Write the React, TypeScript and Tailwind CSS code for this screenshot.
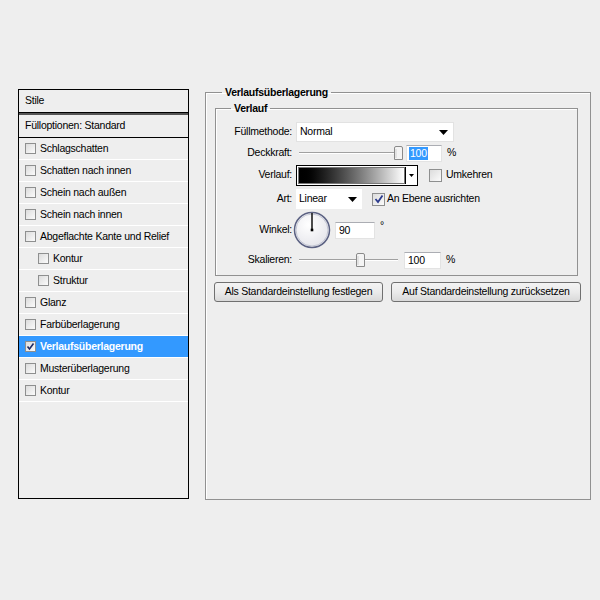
import React from 'react';

const font = { fontFamily: '"Liberation Sans", Arial, sans-serif' };

interface StyleRow {
  label: string;
  indent?: boolean;
  checked?: boolean;
}

const rows: StyleRow[] = [
  { label: 'Schlagschatten' },
  { label: 'Schatten nach innen' },
  { label: 'Schein nach außen' },
  { label: 'Schein nach innen' },
  { label: 'Abgeflachte Kante und Relief' },
  { label: 'Kontur', indent: true },
  { label: 'Struktur', indent: true },
  { label: 'Glanz' },
  { label: 'Farbüberlagerung' },
  { label: 'Verlaufsüberlagerung', checked: true },
  { label: 'Musterüberlagerung' },
  { label: 'Kontur' },
];

const CheckBox: React.FC<{ checked?: boolean }> = ({ checked }) => (
  <span className="relative flex h-[11px] w-[11px] shrink-0 items-center justify-center border border-[#8e8f8f] bg-gradient-to-br from-[#dcdcdc] to-[#fbfbfb]">
    {checked && (
      <svg width="9" height="9" viewBox="0 0 9 9">
        <path d="M1.5 4.5 L3.5 7 L7.5 1.5" fill="none" stroke="#1f2a64" strokeWidth="1.6" />
      </svg>
    )}
  </span>
);

const Triangle = () => (
  <svg width="9" height="5" viewBox="0 0 9 5">
    <path d="M0 0 H9 L4.5 5 Z" fill="#000" />
  </svg>
);

const Slider: React.FC<{ width: number; thumb: number }> = ({ width, thumb }) => (
  <div className="relative h-[16px]" style={{ width }}>
    <div className="absolute left-0 right-0 top-[7px] h-[2px] border-t border-[#a0a0a0] border-b border-b-white" />
    <svg className="absolute top-[1px]" style={{ left: thumb }} width="9" height="14" viewBox="0 0 9 14">
      <path d="M0.5 2 Q0.5 0.5 2 0.5 H7 Q8.5 0.5 8.5 2 V13.5 H0.5 Z" fill="#f4f4f4" stroke="#8a8a8a" />
      <path d="M2 3 V12" stroke="#d0d0d0" />
    </svg>
  </div>
);

const NumberBox: React.FC<{ value: string; width: number; selected?: boolean }> = ({ value, width, selected }) => (
  <div className="flex h-[17px] items-center border border-[#e3e3e3] border-t-[#abadb3] bg-white pl-[2px]" style={{ width }}>
    <span className={selected ? 'bg-[#3399ff] px-[1px] leading-[13px] text-white' : 'px-[1px] leading-[13px]'}>{value}</span>
  </div>
);

export default function App() {
  return (
    <div className="min-h-[600px] w-[600px] bg-[#eeeeee] pl-[18px] pt-[85px] text-[10.5px] tracking-[-0.25px] text-black" style={font}>
      <div className="flex items-start">
        {/* style list */}
        <div className="mt-[4px] flex h-[410px] w-[171px] flex-col border border-black bg-[#eeeeee]">
          <div className="flex h-[23px] items-center border-b border-black pl-[6px]">Stile</div>
          <div className="h-[2px] border-b-2 border-[#555]" />
          <div className="flex h-[23px] items-center border-b border-black pl-[6px]">Fülloptionen: Standard</div>
          {rows.map((r, i) => (
            <div
              key={i}
              className={`flex h-[22px] items-center gap-[4px] border-b border-white ${r.indent ? 'pl-[19px]' : 'pl-[6px]'} ${r.checked ? 'bg-[#3399ff] font-bold text-white' : ''}`}
            >
              <CheckBox checked={r.checked} />
              <span>{r.label}</span>
            </div>
          ))}
        </div>

        {/* gradient overlay settings */}
        <fieldset className="ml-[16px] h-[415px] w-[383px] border border-[#919191] px-[9px] shadow-[inset_1px_1px_0_white]">
          <legend className="ml-[7px] px-[3px] font-bold leading-[14px]">Verlaufsüberlagerung</legend>
          <fieldset className="mt-[2px] w-[363px] border border-[#919191] pb-[7px] shadow-[inset_1px_1px_0_white]">
            <legend className="ml-[15px] px-[3px] font-bold leading-[14px]">Verlauf</legend>

            <div className="mt-[7px] flex h-[20px] items-center">
              <span className="w-[76px] text-right">Füllmethode:</span>
              <div className="ml-[4px] flex h-[20px] w-[158px] items-center justify-between border border-[#e2e2e2] bg-white pl-[3px] pr-[5px]">
                <span>Normal</span>
                <Triangle />
              </div>
            </div>

            <div className="mt-[1px] flex h-[20px] items-center">
              <span className="w-[76px] text-right">Deckkraft:</span>
              <div className="ml-[7px]">
                <Slider width={104} thumb={95} />
              </div>
              <div className="ml-[3px]">
                <NumberBox value="100" width={36} selected />
              </div>
              <span className="ml-[5px]">%</span>
            </div>

            <div className="mt-[2px] flex h-[20px] items-center">
              <span className="w-[76px] text-right">Verlauf:</span>
              <div className="ml-[4px] flex h-[21px] w-[122px] border border-black bg-white p-[1px]">
                <div className="flex-1 border border-[#777] bg-gradient-to-r from-black to-white" />
                <div className="flex w-[11px] items-center justify-center border-l border-black bg-white">
                  <svg width="5" height="3" viewBox="0 0 5 3">
                    <path d="M0 0 H5 L2.5 3 Z" fill="#000" />
                  </svg>
                </div>
              </div>
              <div className="ml-[11px] flex items-center gap-[4px]">
                <span className="flex h-[13px] w-[13px] border border-[#8e8f8f] bg-gradient-to-br from-[#dcdcdc] to-[#fbfbfb]" />
                <span>Umkehren</span>
              </div>
            </div>

            <div className="mt-[4px] flex h-[20px] items-center">
              <span className="w-[76px] text-right">Art:</span>
              <div className="ml-[4px] flex h-[20px] w-[66px] items-center justify-between bg-white pl-[3px] pr-[5px]">
                <span>Linear</span>
                <Triangle />
              </div>
              <div className="ml-[10px] flex items-center gap-[2px]">
                <span className="flex h-[13px] w-[13px] items-center justify-center border border-[#8e8f8f] bg-gradient-to-br from-[#dcdcdc] to-[#fbfbfb]">
                  <svg width="10" height="10" viewBox="0 0 10 10">
                    <path d="M1.5 5 L4 8 L8.5 1.5" fill="none" stroke="#2b3a8c" strokeWidth="1.8" />
                  </svg>
                </span>
                <span>An Ebene ausrichten</span>
              </div>
            </div>

            <div className="mt-[3px] flex h-[36px] items-center">
              <span className="w-[76px] text-right">Winkel:</span>
              <svg className="ml-[1px]" width="38" height="38" viewBox="0 0 38 38">
                <defs>
                  <radialGradient id="dial" cx="0.4" cy="0.35" r="0.7">
                    <stop offset="0" stopColor="#ffffff" />
                    <stop offset="1" stopColor="#e4e4ea" />
                  </radialGradient>
                </defs>
                <circle cx="19" cy="19" r="17.5" fill="url(#dial)" stroke="#5c6283" strokeWidth="1.5" />
                <circle cx="19" cy="19" r="16" fill="none" stroke="#b9bccc" strokeWidth="0.8" />
                <path d="M19 2 V19" stroke="#000" strokeWidth="1.4" />
                <rect x="17.7" y="17.7" width="2.6" height="2.6" fill="#000" />
              </svg>
              <div className="ml-[4px]">
                <NumberBox value="90" width={40} />
              </div>
              <span className="ml-[5px] -translate-y-[4px]">°</span>
            </div>

            <div className="mt-[4px] flex h-[16px] items-center">
              <span className="w-[76px] text-right">Skalieren:</span>
              <div className="ml-[7px]">
                <Slider width={99} thumb={57} />
              </div>
              <div className="ml-[6px]">
                <NumberBox value="100" width={37} />
              </div>
              <span className="ml-[5px]">%</span>
            </div>
          </fieldset>

          <div className="ml-[-1px] mt-[6px] flex gap-[8px]">
            <button className="h-[20px] w-[169px] rounded-[3px] border border-[#707070] bg-gradient-to-b from-[#f3f3f3] via-[#ebebeb] to-[#d9d9d9]">
              Als Standardeinstellung festlegen
            </button>
            <button className="h-[20px] w-[190px] rounded-[3px] border border-[#707070] bg-gradient-to-b from-[#f3f3f3] via-[#ebebeb] to-[#d9d9d9]">
              Auf Standardeinstellung zurücksetzen
            </button>
          </div>
        </fieldset>
      </div>
    </div>
  );
}
